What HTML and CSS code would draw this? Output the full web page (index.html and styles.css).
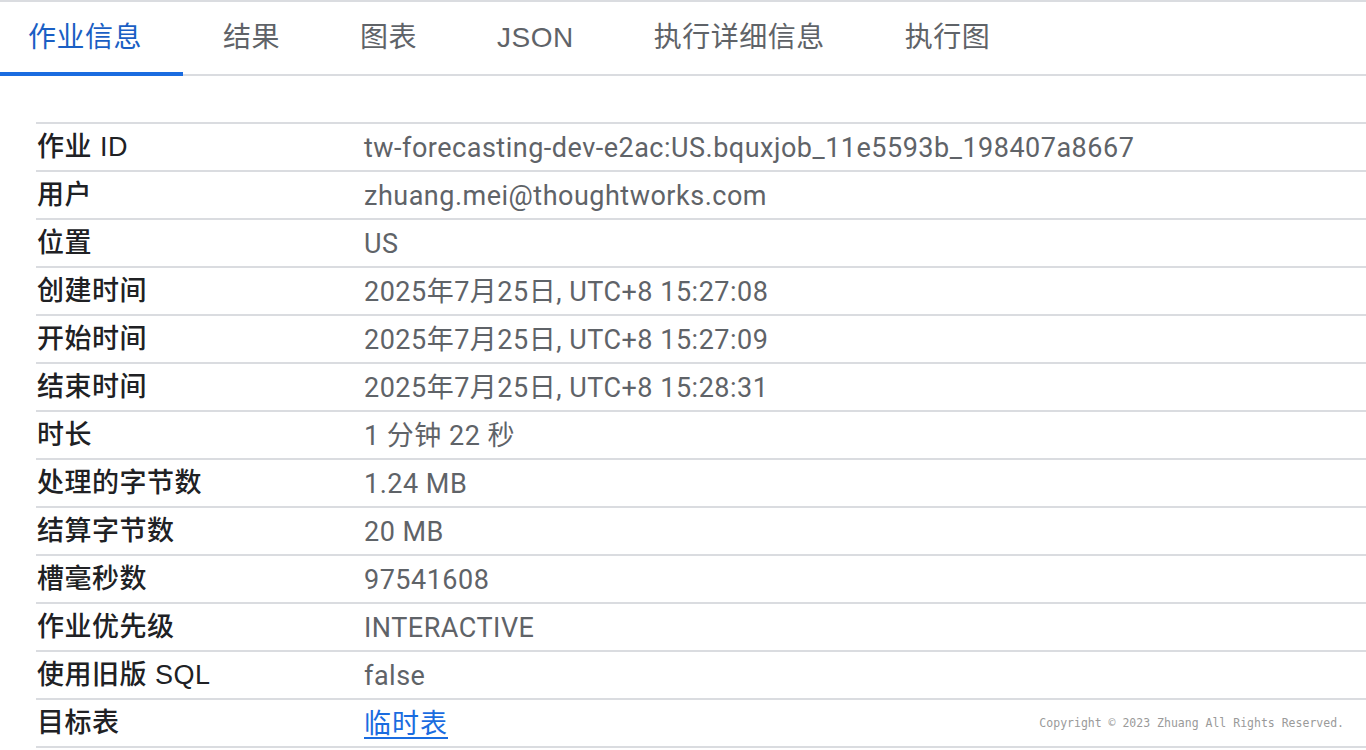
FILE: index.html
```html
<!DOCTYPE html>
<html lang="zh-CN">
<head>
<meta charset="utf-8">
<title>作业信息</title>
<link rel="stylesheet" href="styles.css">
</head>
<body>
<nav class="tabs">
  <div class="tab active">作业信息</div>
  <div class="tab">结果</div>
  <div class="tab">图表</div>
  <div class="tab">JSON</div>
  <div class="tab">执行详细信息</div>
  <div class="tab">执行图</div>
</nav>
<main class="info">
  <div class="row"><div class="label">作业 ID</div><div class="value">tw-forecasting-dev-e2ac:US.bquxjob_11e5593b_198407a8667</div></div>
  <div class="row"><div class="label">用户</div><div class="value">zhuang.mei@thoughtworks.com</div></div>
  <div class="row"><div class="label">位置</div><div class="value">US</div></div>
  <div class="row"><div class="label">创建时间</div><div class="value">2025年7月25日, UTC+8 15:27:08</div></div>
  <div class="row"><div class="label">开始时间</div><div class="value">2025年7月25日, UTC+8 15:27:09</div></div>
  <div class="row"><div class="label">结束时间</div><div class="value">2025年7月25日, UTC+8 15:28:31</div></div>
  <div class="row"><div class="label">时长</div><div class="value">1 分钟 22 秒</div></div>
  <div class="row"><div class="label">处理的字节数</div><div class="value">1.24 MB</div></div>
  <div class="row"><div class="label">结算字节数</div><div class="value">20 MB</div></div>
  <div class="row"><div class="label">槽毫秒数</div><div class="value">97541608</div></div>
  <div class="row"><div class="label">作业优先级</div><div class="value">INTERACTIVE</div></div>
  <div class="row"><div class="label">使用旧版 SQL</div><div class="value">false</div></div>
  <div class="row last"><div class="label">目标表</div><div class="value"><a class="link" href="#">临时表</a></div>
    <div class="copyright">Copyright © 2023 Zhuang All Rights Reserved.</div>
  </div>
</main>
</body>
</html>
```
FILE: styles.css
```css
html, body {
  margin: 0;
  padding: 0;
  background: #ffffff;
}
body {
  font-family: "Liberation Sans", "Noto Sans CJK SC", sans-serif;
  overflow: hidden;
}
.tabs {
  display: flex;
  border-top: 2px solid #dadce0;
  border-bottom: 2px solid #dadce0;
  height: 72px;
}
.tab {
  position: relative;
  display: flex;
  align-items: center;
  box-sizing: border-box;
  padding: 0 40px;
  font-size: 28px;
  line-height: 34px;
  letter-spacing: 0.5px;
  color: #5f6368;
}
.tab:first-child {
  padding-left: 28px;
  padding-right: 41px;
}
.tab.active {
  color: #1a5fc4;
}
.tab.active::after {
  content: "";
  position: absolute;
  left: 0;
  right: 0;
  bottom: -2px;
  height: 4px;
  background: #1a6ce0;
}
.info {
  margin: 46px 0 0 36px;
  border-top: 2px solid #dadce0;
}
.row {
  position: relative;
  display: grid;
  grid-template-columns: 328px 1fr;
  align-items: center;
  height: 46px;
  border-bottom: 2px solid #dadce0;
}
.label {
  padding-left: 1px;
  font-size: 27px;
  line-height: 32px;
  letter-spacing: 0.5px;
  font-weight: 500;
  color: #202124;
}
.value {
  padding-top: 1px;
  font-size: 27px;
  line-height: 32px;
  letter-spacing: 0.5px;
  color: #5f6368;
  font-family: Roboto, "Noto Sans CJK SC", sans-serif;
}
.link {
  color: #1a6ce0;
  letter-spacing: 1px;
  text-decoration: underline;
  text-decoration-thickness: 2px;
  text-underline-offset: 4px;
}
.copyright {
  position: absolute;
  right: 22px;
  top: 50%;
  transform: translateY(-50%);
  font-family: "DejaVu Sans Mono", monospace;
  font-size: 11.5px;
  line-height: 14px;
  letter-spacing: 0;
  color: #9a9a9a;
}
```
